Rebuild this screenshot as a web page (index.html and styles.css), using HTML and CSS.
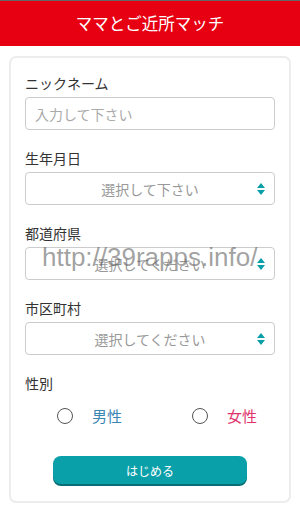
FILE: index.html
```html
<!DOCTYPE html>
<html lang="ja">
<head>
  <meta charset="UTF-8">
  <meta name="viewport" content="width=device-width, initial-scale=1.0">
  <title>ママとご近所マッチ</title>
  <link rel="stylesheet" href="styles.css">
</head>
<body>
  <header class="header">ママとご近所マッチ</header>

  <div class="card">
    <div class="field">
      <label for="nick">ニックネーム</label>
      <input type="text" id="nick" placeholder="入力して下さい">
    </div>

    <div class="field">
      <label for="birth">生年月日</label>
      <div class="select-wrap">
        <select id="birth"><option>選択して下さい</option></select>
        <svg class="arrow" width="8" height="12" viewBox="0 0 8 12"><path d="M4 0 L8 5 H0 Z M0 7 H8 L4 12 Z" fill="#0a9fa8"/></svg>
      </div>
    </div>

    <div class="field">
      <label for="pref">都道府県</label>
      <div class="select-wrap">
        <select id="pref"><option>選択してください</option></select>
        <svg class="arrow" width="8" height="12" viewBox="0 0 8 12"><path d="M4 0 L8 5 H0 Z M0 7 H8 L4 12 Z" fill="#0a9fa8"/></svg>
      </div>
    </div>

    <div class="field">
      <label for="city">市区町村</label>
      <div class="select-wrap">
        <select id="city"><option>選択してください</option></select>
        <svg class="arrow" width="8" height="12" viewBox="0 0 8 12"><path d="M4 0 L8 5 H0 Z M0 7 H8 L4 12 Z" fill="#0a9fa8"/></svg>
      </div>
    </div>

    <div class="field">
      <label>性別</label>
      <div class="gender">
        <label class="radio male"><input type="radio" name="sex"> 男性</label>
        <label class="radio female"><input type="radio" name="sex"> 女性</label>
      </div>
    </div>

    <button class="start">はじめる</button>
  </div>

  <div class="watermark">http://39rapps.info/</div>
</body>
</html>
```

FILE: styles.css
```css
body { margin: 0; background: #fff; font-family: "Noto Sans CJK JP", "Noto Sans", sans-serif; color: #333; position: relative; }
.header { border-top: 1px solid #666; background: #e60012; color: #fff; height: 45px; line-height: 45px; text-align: center; font-size: 16.5px; }
.card { margin: 10px 9px 0; border: 2px solid #ececec; border-radius: 7px; padding: 15px 14px 17px; }
.field { margin-bottom: 18px; }
.field > label { display: block; font-size: 14px; line-height: 20px; margin-bottom: 4px; color: #333; }
input[type="text"], select { box-sizing: border-box; width: 100%; height: 33px; border: 1px solid #ccc; border-radius: 4px; font-family: inherit; font-size: 14px; background: #fff; }
input[type="text"] { padding: 0 9px; }
input::placeholder { color: #aaa; }
select { appearance: none; -webkit-appearance: none; color: #999; text-align: center; text-align-last: center; padding: 0 20px; }
.select-wrap { position: relative; }
.arrow { position: absolute; right: 10px; top: 11px; }
.gender { display: flex; padding: 9px 0 0 32px; }
.radio { display: flex; align-items: center; font-size: 15px; line-height: 20px; }
.radio input { appearance: none; -webkit-appearance: none; width: 16px; height: 16px; margin: 0 19px 0 0; border: 1.5px solid #555; border-radius: 50%; box-sizing: border-box; }
.male { width: 135px; color: #3a86b4; }
.female { color: #e0336b; }
.start { display: block; margin: 30px auto 0; width: 194px; height: 28px; border: none; border-radius: 8px; background: #0aa0aa; box-shadow: 0 2px 0 #066f76; color: #fff; font-family: inherit; font-size: 12px; }
.watermark { position: absolute; left: 42px; top: 242px; font-family: "Liberation Sans", Arial, sans-serif; font-size: 26px; line-height: 30px; color: rgba(100, 100, 100, 0.6); pointer-events: none; }
```
